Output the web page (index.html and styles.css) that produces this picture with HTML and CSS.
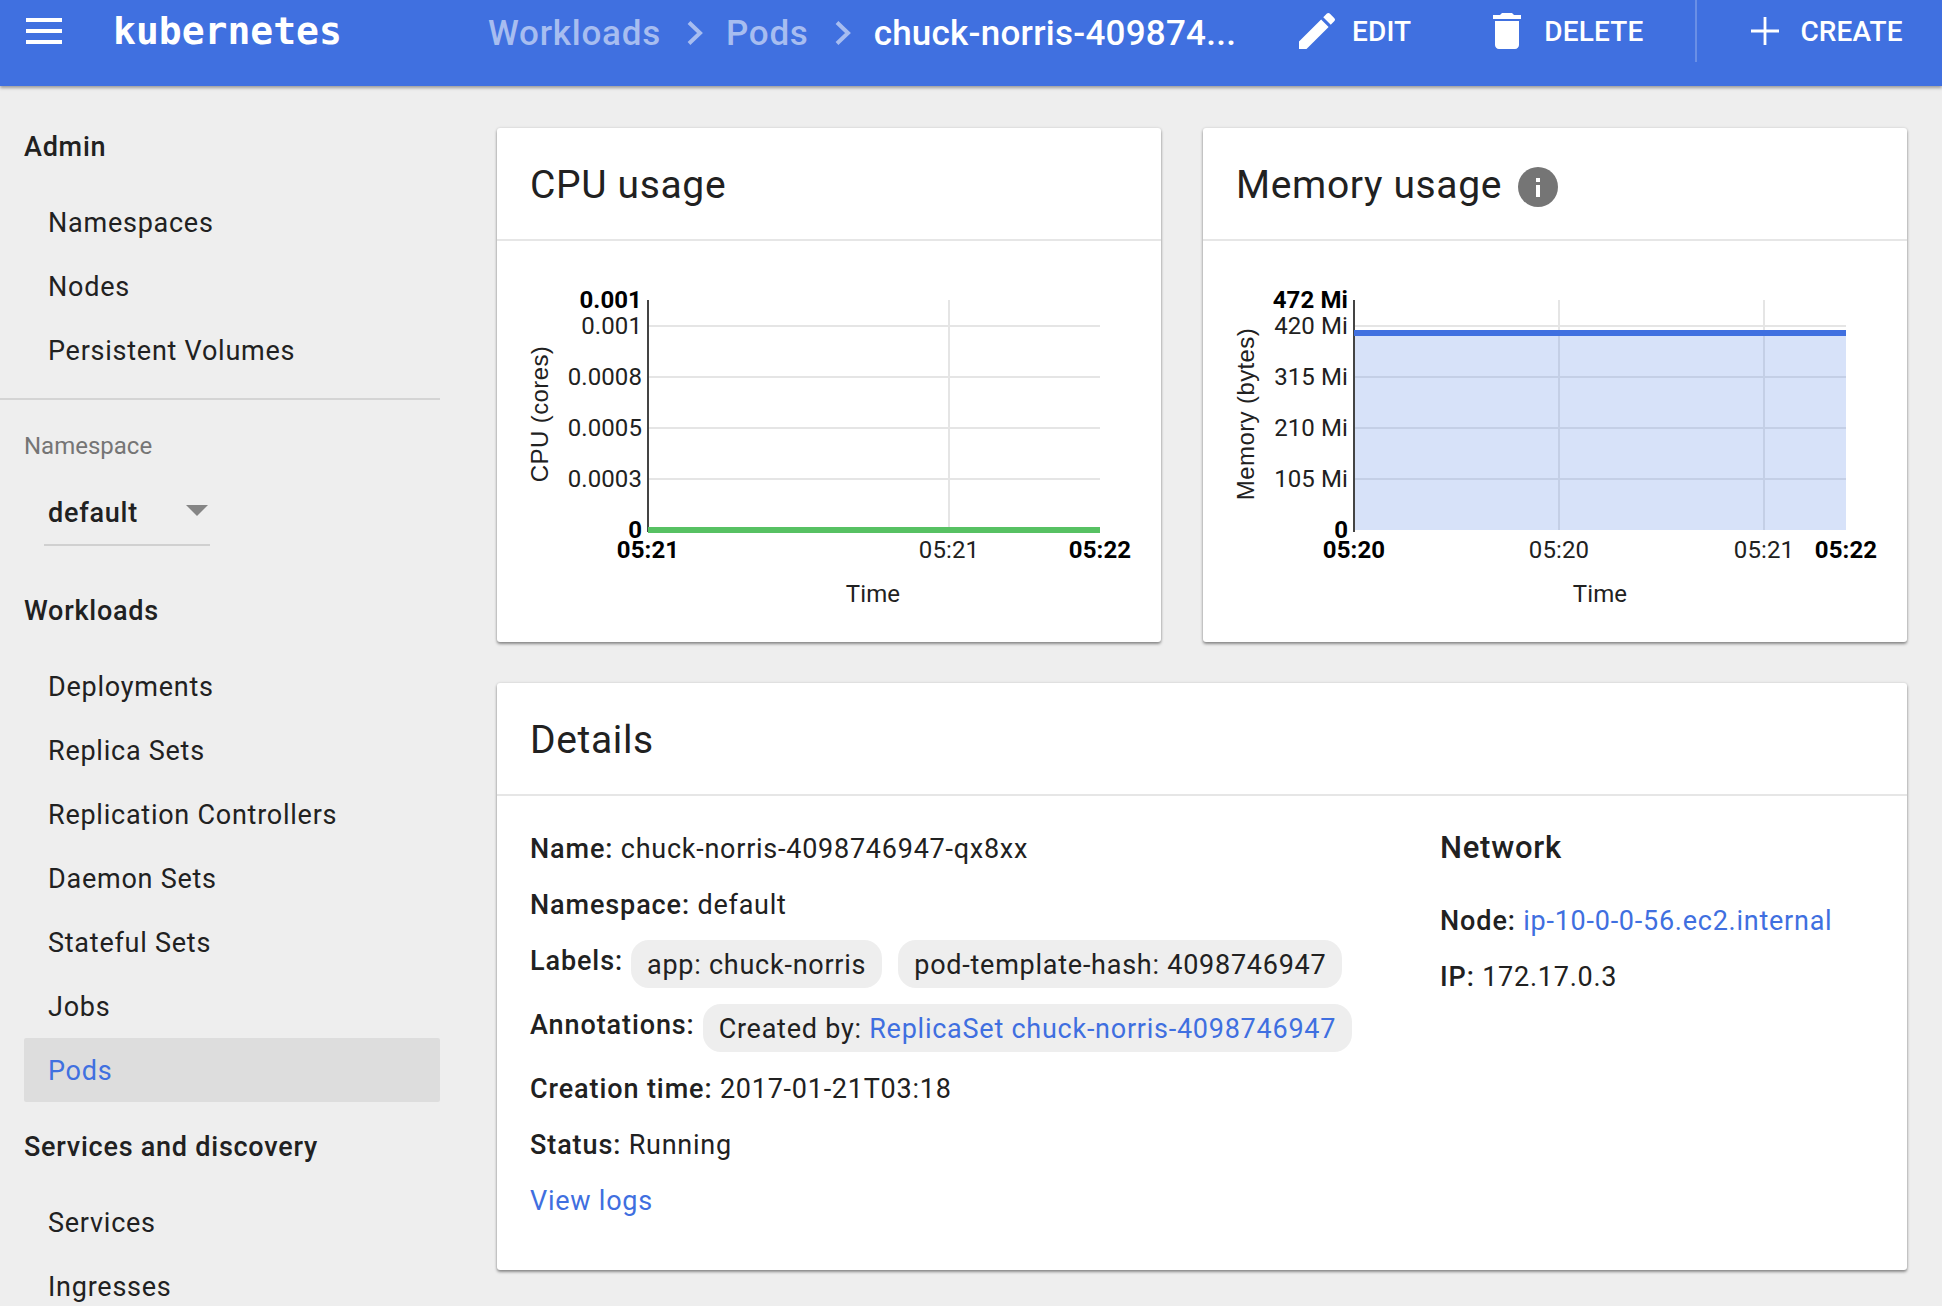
FILE: index.html
```html
<!DOCTYPE html>
<html lang="en">
<head>
<meta charset="utf-8">
<title>Pod details - Kubernetes Dashboard</title>
<link rel="stylesheet" href="styles.css">
</head>
<body>
<header class="toolbar">
  <button class="menu" aria-label="Menu"><span></span><span></span><span></span></button>
  <div class="logo">kubernetes</div>
  <nav class="crumbs">
    <a class="crumb">Workloads</a>
    <svg class="chev" viewBox="0 0 16 24"><path d="M2 1.500l11 10.500L2 22.500" /></svg>
    <a class="crumb">Pods</a>
    <svg class="chev" viewBox="0 0 16 24"><path d="M2 1.500l11 10.500L2 22.500" /></svg>
    <span class="crumb current">chuck-norris-409874...</span>
  </nav>
  <div class="action edit">
    <svg class="ico" viewBox="0 0 24 24"><path d="M3 17.250V21h3.750L17.810 9.940l-3.750-3.750L3 17.250zM20.710 7.040a1 1 0 0 0 0-1.410l-2.340-2.340a1 1 0 0 0-1.410 0l-1.830 1.830 3.750 3.750 1.830-1.830z"/></svg>
    <span>EDIT</span>
  </div>
  <div class="action delete">
    <svg class="ico" viewBox="0 0 24 24"><path d="M6 19c0 1.100.9 2 2 2h8c1.100 0 2-.9 2-2V7H6v12zM19 4h-3.500l-1-1h-5l-1 1H5v2h14V4z"/></svg>
    <span>DELETE</span>
  </div>
  <div class="sep"></div>
  <div class="action create">
    <svg class="ico" viewBox="0 0 24 24"><path d="M19 12.700h-6.300V19h-1.400v-6.300H5v-1.400h6.300V5h1.400v6.300H19z"/></svg>
    <span>CREATE</span>
  </div>
</header>

<div class="page">
  <aside class="side">
    <div class="group">Admin</div>
    <a class="item">Namespaces</a>
    <a class="item">Nodes</a>
    <a class="item">Persistent Volumes</a>
    <div class="rule"></div>
    <div class="ns-label">Namespace</div>
    <div class="ns-select"><span>default</span><i class="caret"></i></div>
    <div class="group">Workloads</div>
    <a class="item">Deployments</a>
    <a class="item">Replica Sets</a>
    <a class="item">Replication Controllers</a>
    <a class="item">Daemon Sets</a>
    <a class="item">Stateful Sets</a>
    <a class="item">Jobs</a>
    <a class="item active">Pods</a>
    <div class="group tight">Services and discovery</div>
    <a class="item">Services</a>
    <a class="item">Ingresses</a>
  </aside>

  <main class="main">
    <div class="charts">
      <section class="card">
        <h2 class="card-title">CPU usage</h2>
        <svg class="chart" viewBox="497 241 664 401">
          <g class="grid">
            <path d="M648 326H1100M648 377H1100M648 428H1100M648 479H1100M949 300V530"/>
          </g>
          <path class="axis" d="M648 300V532"/>
          <path class="cpu-line" d="M648 530H1100"/>
          <g class="ticks">
            <text class="b" x="642" y="308">0.001</text>
            <text x="642" y="334">0.001</text>
            <text x="642" y="385">0.0008</text>
            <text x="642" y="436">0.0005</text>
            <text x="642" y="487">0.0003</text>
            <text class="b" x="642" y="538">0</text>
          </g>
          <g class="xticks">
            <text class="b" x="648" y="558">05:21</text>
            <text x="949" y="558">05:21</text>
            <text class="b" x="1100" y="558">05:22</text>
            <text x="873" y="602">Time</text>
          </g>
          <text class="ytitle" transform="translate(548 414) rotate(-90)">CPU (cores)</text>
        </svg>
      </section>
      <section class="card">
        <h2 class="card-title">Memory usage
          <svg class="info" viewBox="0 0 40 40"><circle cx="20" cy="20" r="20"/><rect class="info-i" x="18" y="18" width="4" height="12"/><rect class="info-i" x="18" y="11" width="4" height="4"/></svg>
        </h2>
        <svg class="chart" viewBox="1203 241 704 401">
          <rect class="mem-fill" x="1354" y="333" width="492" height="197"/>
          <g class="grid">
            <path d="M1354 326H1846"/>
            <path class="over" d="M1354 377H1846M1354 428H1846M1354 479H1846M1559 333V530M1764 333V530"/>
            <path d="M1559 300V333M1764 300V333"/>
          </g>
          <path class="axis" d="M1354 300V532"/>
          <path class="mem-line" d="M1354 333H1846"/>
          <g class="ticks">
            <text class="b" x="1348" y="308">472 Mi</text>
            <text x="1348" y="334">420 Mi</text>
            <text x="1348" y="385">315 Mi</text>
            <text x="1348" y="436">210 Mi</text>
            <text x="1348" y="487">105 Mi</text>
            <text class="b" x="1348" y="538">0</text>
          </g>
          <g class="xticks">
            <text class="b" x="1354" y="558">05:20</text>
            <text x="1559" y="558">05:20</text>
            <text x="1764" y="558">05:21</text>
            <text class="b" x="1846" y="558">05:22</text>
            <text x="1600" y="602">Time</text>
          </g>
          <text class="ytitle" transform="translate(1254 414) rotate(-90)">Memory (bytes)</text>
        </svg>
      </section>
    </div>

    <section class="card details">
      <h2 class="card-title">Details</h2>
      <div class="details-body">
        <div class="col-main">
          <div class="row"><b>Name:</b> chuck-norris-4098746947-qx8xx</div>
          <div class="row"><b>Namespace:</b> default</div>
          <div class="row chips"><b>Labels:</b><span class="chip">app: chuck-norris</span><span class="chip">pod-template-hash: 4098746947</span></div>
          <div class="row chips"><b>Annotations:</b><span class="chip">Created by: <a class="link">ReplicaSet chuck-norris-4098746947</a></span></div>
          <div class="row"><b>Creation time:</b> 2017-01-21T03:18</div>
          <div class="row"><b>Status:</b> Running</div>
          <div class="row"><a class="link logs">View logs</a></div>
        </div>
        <div class="col-net">
          <h3 class="net-title">Network</h3>
          <div class="row"><b>Node:</b> <a class="link">ip-10-0-0-56.ec2.internal</a></div>
          <div class="row"><b>IP:</b> 172.17.0.3</div>
        </div>
      </div>
    </section>
  </main>
</div>
</body>
</html>
```

FILE: styles.css
```css
* { box-sizing: border-box; }
html, body { margin: 0; height: 1306px; overflow: hidden; }
body {
  background: #eeeeee;
  color: #212121;
  font-family: Roboto, "Liberation Sans", sans-serif;
  font-size: 27px;
  letter-spacing: .75px;
}

/* toolbar */
.toolbar {
  height: 86px;
  background: #4070e0;
  box-shadow: 0 2px 3px rgba(0,0,0,.35);
  color: #fff;
  display: flex;
  align-items: flex-start;
  padding-left: 26px;
  position: relative;
}
.menu {
  width: 36px; height: 62px;
  padding: 0; border: 0; background: none;
  display: flex; flex-direction: column; justify-content: center; gap: 7px;
}
.menu span { display: block; height: 4px; background: #fff; }
.logo {
  margin-left: 51px;
  width: 375px;
  line-height: 62px;
  font-family: "DejaVu Sans Mono", monospace;
  font-weight: 700;
  font-size: 38px;
  letter-spacing: 0;
}
.crumbs {
  width: 760px;
  height: 62px;
  padding-top: 4px;
  display: flex;
  align-items: center;
  flex: none;
}
.crumb {
  font-size: 35px;
  font-weight: 500;
  letter-spacing: .75px;
  color: #a7bdf0;
  white-space: nowrap;
}
.crumb.current { color: #fff; letter-spacing: .25px; }
.chev {
  width: 16px; height: 24px;
  margin: 0 23px 0 26px;
  fill: none; stroke: #a7bdf0; stroke-width: 4;
}
.action {
  height: 62px;
  display: flex;
  align-items: center;
  font-size: 28px;
  font-weight: 500;
  letter-spacing: .15px;
  flex: none;
}
.ico { width: 48px; height: 48px; fill: #fff; flex: none; }
.edit { margin-left: 45px; }
.edit span { margin-left: 11px; }
.delete { margin-left: 72px; }
.delete span { margin-left: 13px; }
.sep { width: 2px; height: 62px; background: #6a8fe6; margin-left: 52px; flex: none; }
.create { margin-left: 44px; }
.create span { margin-left: 11px; }

/* layout */
.page { display: flex; align-items: flex-start; }

/* sidebar */
.side { width: 440px; flex: none; padding-top: 29px; }
.group {
  height: 64px;
  line-height: 64px;
  padding-left: 24px;
  font-weight: 500;
}
.group.tight { margin-top: 13px; }
.group + .item { margin-top: 11px; }
.item {
  display: block;
  height: 64px;
  line-height: 66px;
  margin-left: 24px;
  padding-left: 24px;
  border-radius: 2px;
}
.item.active { background: #dddddd; color: #4070e0; }
.rule { height: 2px; background: #d4d4d4; margin-top: 16px; }
.ns-label {
  color: #757575;
  font-size: 24px;
  letter-spacing: 0;
  padding-left: 24px;
  height: 32px;
  line-height: 32px;
  margin-top: 30px;
}
.ns-select {
  margin: 24px 0 33px 44px;
  width: 166px;
  height: 60px;
  padding: 0 2px 4px 4px;
  border-bottom: 2px solid #d0d0d0;
  display: flex;
  align-items: center;
  justify-content: space-between;
  font-weight: 500;
}
.caret {
  width: 0; height: 0;
  border-left: 11px solid transparent;
  border-right: 11px solid transparent;
  border-top: 11px solid #858585;
  margin-bottom: 6px;
}

/* cards */
.main { flex: none; width: 1467px; padding-top: 42px; padding-left: 57px; }
.charts { display: grid; grid-template-columns: 664px 704px; gap: 42px; }
.card {
  background: #fff;
  border-radius: 3px;
  box-shadow: 0 2px 3px rgba(0,0,0,.4), 0 0 3px rgba(0,0,0,.12);
  display: block;
}
.card-title {
  margin: 0;
  height: 113px;
  padding: 2px 0 0 33px;
  display: flex;
  align-items: center;
  gap: 16px;
  border-bottom: 2px solid #e6e6e6;
  font-size: 39px;
  font-weight: 400;
  letter-spacing: .65px;
}
.info { width: 40px; height: 40px; margin-top: 4px; }
.info circle { fill: #757575; }
.info-i { fill: #fff; }
.chart { display: block; width: 100%; height: 401px; }
.grid path { stroke: #e5e5e5; stroke-width: 2; fill: none; }
.grid path.over { stroke: #c4cfe6; }
.axis { stroke: #444; stroke-width: 2; fill: none; }
.cpu-line { stroke: #57c163; stroke-width: 6; }
.mem-line { stroke: #4070e0; stroke-width: 6; }
.mem-fill { fill: #d7e2f9; }
.ticks text, .xticks text { font-size: 24px; letter-spacing: .1px; fill: #212121; }
.ticks text { text-anchor: end; }
.xticks text { text-anchor: middle; }
.chart .b { font-weight: 700; fill: #000; }
.ytitle {
  font-family: "Liberation Sans", sans-serif;
  font-size: 24px;
  letter-spacing: .4px;
  text-anchor: middle;
  fill: #212121;
}

/* details */
.details { margin-top: 41px; width: 1410px; }
.details-body { display: flex; padding: 25px 33px 41px; }
.col-main { width: 910px; flex: none; }
.row { min-height: 56px; line-height: 56px; white-space: nowrap; }
.row b { font-weight: 500; letter-spacing: .9px; }
.chips { display: flex; height: 64px; align-items: flex-start; }
.chips b { line-height: 48px; margin-top: 4px; }
.chip {
  height: 48px;
  line-height: 50px;
  margin-top: 7px;
  margin-left: 16px;
  padding: 0 16px;
  border-radius: 18px;
  background: #eeeeee;
}
.chips b + .chip { margin-left: 8px; }
.link { color: #3f6fe0; }
.net-title {
  margin: -1px 0 17px;
  height: 56px;
  line-height: 56px;
  font-size: 31px;
  font-weight: 500;
}
```
